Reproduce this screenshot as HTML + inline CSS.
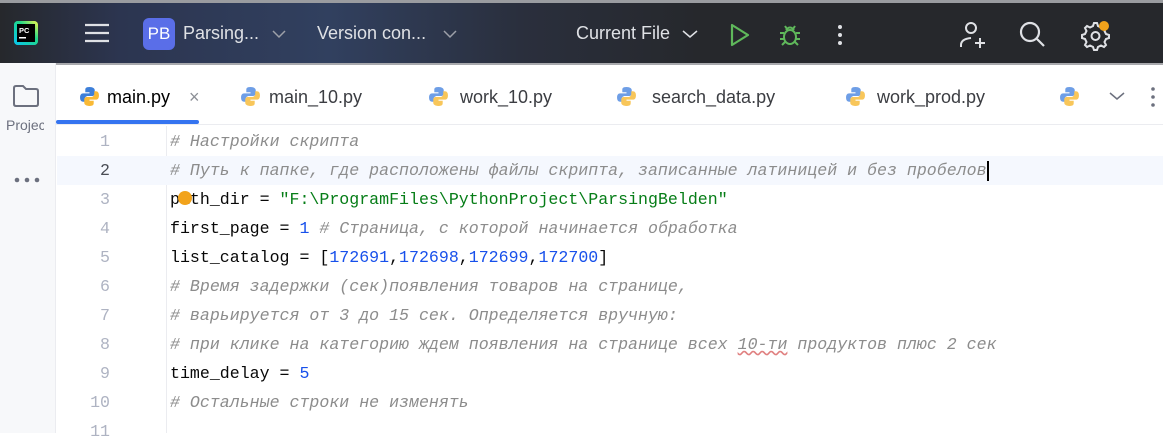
<!DOCTYPE html>
<html><head><meta charset="utf-8"><style>
*{margin:0;padding:0;box-sizing:border-box}
body{width:1163px;height:433px;overflow:hidden;background:#fff;font-family:"Liberation Sans",sans-serif;position:relative}
#top{position:absolute;left:0;top:0;width:1163px;height:63px;background:linear-gradient(90deg,#26282c 0,#2c3550 120px,#31405f 330px,#2a2f3d 520px,#26282c 700px);border-top:3px solid #9a9ca0}
.t{position:absolute;color:#dfe1e5;font-size:18px;top:20px}
#left{position:absolute;left:0;top:63px;width:56px;height:370px;background:#f7f8fa;border-right:1px solid #ebecf0}
#tabs{position:absolute;left:56px;top:63px;width:1107px;height:62px;border-top:2px solid #a8a9ad;border-bottom:1px solid #ebecf0}
.tab{position:absolute;top:22px;font-size:18px;color:#3b3d42}
.py{position:absolute;top:21px;width:21px;height:21px}
#code{position:absolute;left:57px;top:127px;width:1106px;font-family:"Liberation Mono",monospace;font-size:16.6px}
.l{height:29px;line-height:29px;position:relative;white-space:pre}
.n{position:absolute;left:0;width:53px;text-align:right;color:#aeb3c2}
.c{position:absolute;left:113px;color:#080808}
.cm{color:#8c8c8c;font-style:italic}
.s{color:#067d17}.d{color:#1750eb}
</style></head><body>
<div id="top">
 <svg style="position:absolute;left:14px;top:18px" width="24" height="24"><rect x="0" y="0" width="24" height="24" rx="4" fill="#21d789"/><rect x="0" y="0" width="24" height="24" rx="4" fill="url(#g)"/><defs><linearGradient id="g" x1="0" y1="1" x2="1" y2="0"><stop offset="0" stop-color="#07c3f2"/><stop offset=".6" stop-color="#21d789"/><stop offset="1" stop-color="#fcf84a"/></linearGradient></defs><rect x="3" y="3" width="18" height="18" fill="#000"/><text x="5" y="12" fill="#fff" font-size="7.5" font-family="Liberation Sans" font-weight="bold">PC</text><rect x="5" y="16" width="7" height="1.5" fill="#fff"/></svg>
 <svg style="position:absolute;left:84px;top:18px" width="26" height="24"><g stroke="#dfe1e5" stroke-width="2.2"><line x1="1" y1="4" x2="25" y2="4"/><line x1="1" y1="12" x2="25" y2="12"/><line x1="1" y1="20" x2="25" y2="20"/></g></svg>
 <div style="position:absolute;left:143px;top:15px;width:32px;height:32px;border-radius:6px;background:#5a6ee8;color:#fff;font-size:17px;line-height:32px;text-align:center">PB</div>
 <div class="t" style="left:183px">Parsing...</div>
 <svg style="position:absolute;left:272px;top:27px" width="14" height="9"><path d="M1 1l6 6 6-6" stroke="#9da0a8" stroke-width="1.5" fill="none"/></svg>
 <div class="t" style="left:317px">Version con...</div>
 <svg style="position:absolute;left:443px;top:27px" width="14" height="9"><path d="M1 1l6 6 6-6" stroke="#9da0a8" stroke-width="1.5" fill="none"/></svg>
 <div class="t" style="left:576px">Current File</div>
 <svg style="position:absolute;left:682px;top:27px" width="16" height="9"><path d="M1 1l7 6 7-6" stroke="#dfe1e5" stroke-width="1.5" fill="none"/></svg>
 <svg style="position:absolute;left:729px;top:20px" width="22" height="24"><path d="M3 2L19 12 3 22Z" stroke="#5fb85b" stroke-width="2.2" fill="none" stroke-linejoin="round"/></svg>
 <svg style="position:absolute;left:777px;top:19px" width="26" height="26"><g stroke="#5fb85b" stroke-width="2" fill="none"><ellipse cx="13" cy="15" rx="6" ry="7"/><path d="M9 8q4-5 8 0M3 11h4M19 11h4M3 17h4M19 17h4M5 23l3-3M21 23l-3-3M8 4l2 3M18 4l-2 3"/></g></svg>
 <svg style="position:absolute;left:836px;top:20px" width="8" height="24"><g fill="#dfe1e5"><circle cx="4" cy="4" r="2"/><circle cx="4" cy="12" r="2"/><circle cx="4" cy="20" r="2"/></g></svg>
 <svg style="position:absolute;left:959px;top:17px" width="30" height="30"><g stroke="#dfe1e5" stroke-width="2" fill="none"><circle cx="12" cy="8" r="5"/><path d="M2 27v-2q0-6 10-7"/><path d="M21 18v10M16 23h10"/></g></svg>
 <svg style="position:absolute;left:1018px;top:17px" width="30" height="30"><g stroke="#dfe1e5" stroke-width="2.2" fill="none"><circle cx="12" cy="12" r="9"/><path d="M19 19l7 7"/></g></svg>
 <svg style="position:absolute;left:1078px;top:16px" width="34" height="32"><g stroke="#dfe1e5" stroke-width="2" fill="none"><path d="M16 4l3 0 1 3 3 1.5 3-1.5 2 2-1.5 3 1.5 3 3 1v3l-3 1-1.5 3 1.5 3-2 2-3-1.5-3 1.5-1 3h-3l-1-3-3-1.5-3 1.5-2-2 1.5-3-1.5-3-3-1v-3l3-1 1.5-3L7 9l2-2 3 1.5L15 7z"/><circle cx="17.5" cy="17" r="4"/></g><circle cx="26" cy="7" r="5" fill="#f2a31b"/></svg>
</div>
<div id="left">
 <svg style="position:absolute;left:12px;top:21px" width="28" height="24"><path d="M2 4q0-2 2-2h7l3 3h10q2 0 2 2v13q0 2-2 2H4q-2 0-2-2z" stroke="#6c707e" stroke-width="2" fill="none"/></svg>
 <div style="position:absolute;left:6px;top:54px;font-size:14px;color:#6c707e;width:38px;overflow:hidden;white-space:nowrap">Projec</div>
 <svg style="position:absolute;left:13px;top:113px" width="28" height="8"><g fill="#6c707e"><circle cx="4" cy="4" r="2.3"/><circle cx="14" cy="4" r="2.3"/><circle cx="24" cy="4" r="2.3"/></g></svg>
</div>
<div id="tabs">
 <div style="position:absolute;left:0;top:55px;width:143px;height:4px;background:#3574f0;border-radius:2px"></div>
 <svg class="py" style="left:23px" viewBox="0 0 20 20"><path d="M10 1c-4 0-4 1.5-4 3v2h4v1H4c-2 0-3 1.5-3 4s1 4 3 4h1.5v-2.5c0-2 1.5-3 3-3h4c1.5 0 2.5-1 2.5-2.5V4c0-1.5-1.5-3-5-3z" fill="#3d7fd9"/><path d="M10 19c4 0 4-1.5 4-3v-2h-4v-1h6c2 0 3-1.5 3-4s-1-4-3-4h-1.5v2.5c0 2-1.5 3-3 3h-4C6 10.5 5 11.5 5 13v3c0 1.5 1.5 3 5 3z" fill="#f9b935"/></svg>
 <div class="tab" style="left:51px;color:#000">main.py</div>
 <div class="tab" style="left:133px;color:#8c8f96">×</div>
 <svg class="py" style="left:184px" viewBox="0 0 20 20"><path d="M10 1c-4 0-4 1.5-4 3v2h4v1H4c-2 0-3 1.5-3 4s1 4 3 4h1.5v-2.5c0-2 1.5-3 3-3h4c1.5 0 2.5-1 2.5-2.5V4c0-1.5-1.5-3-5-3z" fill="#6e9ee6"/><path d="M10 19c4 0 4-1.5 4-3v-2h-4v-1h6c2 0 3-1.5 3-4s-1-4-3-4h-1.5v2.5c0 2-1.5 3-3 3h-4C6 10.5 5 11.5 5 13v3c0 1.5 1.5 3 5 3z" fill="#f8c65a"/></svg>
 <div class="tab" style="left:213px">main_10.py</div>
 <svg class="py" style="left:372px" viewBox="0 0 20 20"><path d="M10 1c-4 0-4 1.5-4 3v2h4v1H4c-2 0-3 1.5-3 4s1 4 3 4h1.5v-2.5c0-2 1.5-3 3-3h4c1.5 0 2.5-1 2.5-2.5V4c0-1.5-1.5-3-5-3z" fill="#6e9ee6"/><path d="M10 19c4 0 4-1.5 4-3v-2h-4v-1h6c2 0 3-1.5 3-4s-1-4-3-4h-1.5v2.5c0 2-1.5 3-3 3h-4C6 10.5 5 11.5 5 13v3c0 1.5 1.5 3 5 3z" fill="#f8c65a"/></svg>
 <div class="tab" style="left:404px">work_10.py</div>
 <svg class="py" style="left:560px" viewBox="0 0 20 20"><path d="M10 1c-4 0-4 1.5-4 3v2h4v1H4c-2 0-3 1.5-3 4s1 4 3 4h1.5v-2.5c0-2 1.5-3 3-3h4c1.5 0 2.5-1 2.5-2.5V4c0-1.5-1.5-3-5-3z" fill="#6e9ee6"/><path d="M10 19c4 0 4-1.5 4-3v-2h-4v-1h6c2 0 3-1.5 3-4s-1-4-3-4h-1.5v2.5c0 2-1.5 3-3 3h-4C6 10.5 5 11.5 5 13v3c0 1.5 1.5 3 5 3z" fill="#f8c65a"/></svg>
 <div class="tab" style="left:596px">search_data.py</div>
 <svg class="py" style="left:789px" viewBox="0 0 20 20"><path d="M10 1c-4 0-4 1.5-4 3v2h4v1H4c-2 0-3 1.5-3 4s1 4 3 4h1.5v-2.5c0-2 1.5-3 3-3h4c1.5 0 2.5-1 2.5-2.5V4c0-1.5-1.5-3-5-3z" fill="#6e9ee6"/><path d="M10 19c4 0 4-1.5 4-3v-2h-4v-1h6c2 0 3-1.5 3-4s-1-4-3-4h-1.5v2.5c0 2-1.5 3-3 3h-4C6 10.5 5 11.5 5 13v3c0 1.5 1.5 3 5 3z" fill="#f8c65a"/></svg>
 <div class="tab" style="left:821px">work_prod.py</div>
 <svg class="py" style="left:1003px" viewBox="0 0 20 20"><path d="M10 1c-4 0-4 1.5-4 3v2h4v1H4c-2 0-3 1.5-3 4s1 4 3 4h1.5v-2.5c0-2 1.5-3 3-3h4c1.5 0 2.5-1 2.5-2.5V4c0-1.5-1.5-3-5-3z" fill="#6e9ee6"/><path d="M10 19c4 0 4-1.5 4-3v-2h-4v-1h6c2 0 3-1.5 3-4s-1-4-3-4h-1.5v2.5c0 2-1.5 3-3 3h-4C6 10.5 5 11.5 5 13v3c0 1.5 1.5 3 5 3z" fill="#f8c65a"/></svg>
 <svg style="position:absolute;left:1053px;top:27px" width="16" height="9"><path d="M1 1l7 6 7-6" stroke="#6c707e" stroke-width="1.5" fill="none"/></svg>
 <svg style="position:absolute;left:1094px;top:20px" width="6" height="24"><g fill="#6c707e"><circle cx="3" cy="4" r="1.8"/><circle cx="3" cy="12" r="1.8"/><circle cx="3" cy="20" r="1.8"/></g></svg>
</div>
<div style="position:absolute;left:166px;top:126px;width:1px;height:307px;background:#ebecf0"></div>
<div id="code">
<div class="l"><span class="n">1</span><span class="c cm"># Настройки скрипта</span></div>
<div class="l" style="background:#f5f8fe"><span class="n" style="color:#4a4d55">2</span><span class="c cm"># Путь к папке, где расположены файлы скрипта, записанные латиницей и без пробелов</span><span style="position:absolute;left:930px;top:5px;width:2px;height:20px;background:#000"></span></div>
<div class="l"><span class="n">3</span><span class="c">path_dir = <span class="s">"F:\ProgramFiles\PythonProject\ParsingBelden"</span></span><span style="position:absolute;left:121px;top:6px;width:14px;height:14px;border-radius:50%;background:#f2a31b"></span></div>
<div class="l"><span class="n">4</span><span class="c">first_page = <span class="d">1</span> <span class="cm"># Страница, с которой начинается обработка</span></span></div>
<div class="l"><span class="n">5</span><span class="c">list_catalog = [<span class="d">172691</span>,<span class="d">172698</span>,<span class="d">172699</span>,<span class="d">172700</span>]</span></div>
<div class="l"><span class="n">6</span><span class="c cm"># Время задержки (сек)появления товаров на странице,</span></div>
<div class="l"><span class="n">7</span><span class="c cm"># варьируется от 3 до 15 сек. Определяется вручную:</span></div>
<div class="l"><span class="n">8</span><span class="c cm"># при клике на категорию ждем появления на странице всех <span style="text-decoration:underline wavy #e08080">10-ти</span> продуктов плюс 2 сек</span></div>
<div class="l"><span class="n">9</span><span class="c">time_delay = <span class="d">5</span></span></div>
<div class="l"><span class="n">10</span><span class="c cm"># Остальные строки не изменять</span></div>
<div class="l"><span class="n">11</span></div>
</div>
</body></html>
